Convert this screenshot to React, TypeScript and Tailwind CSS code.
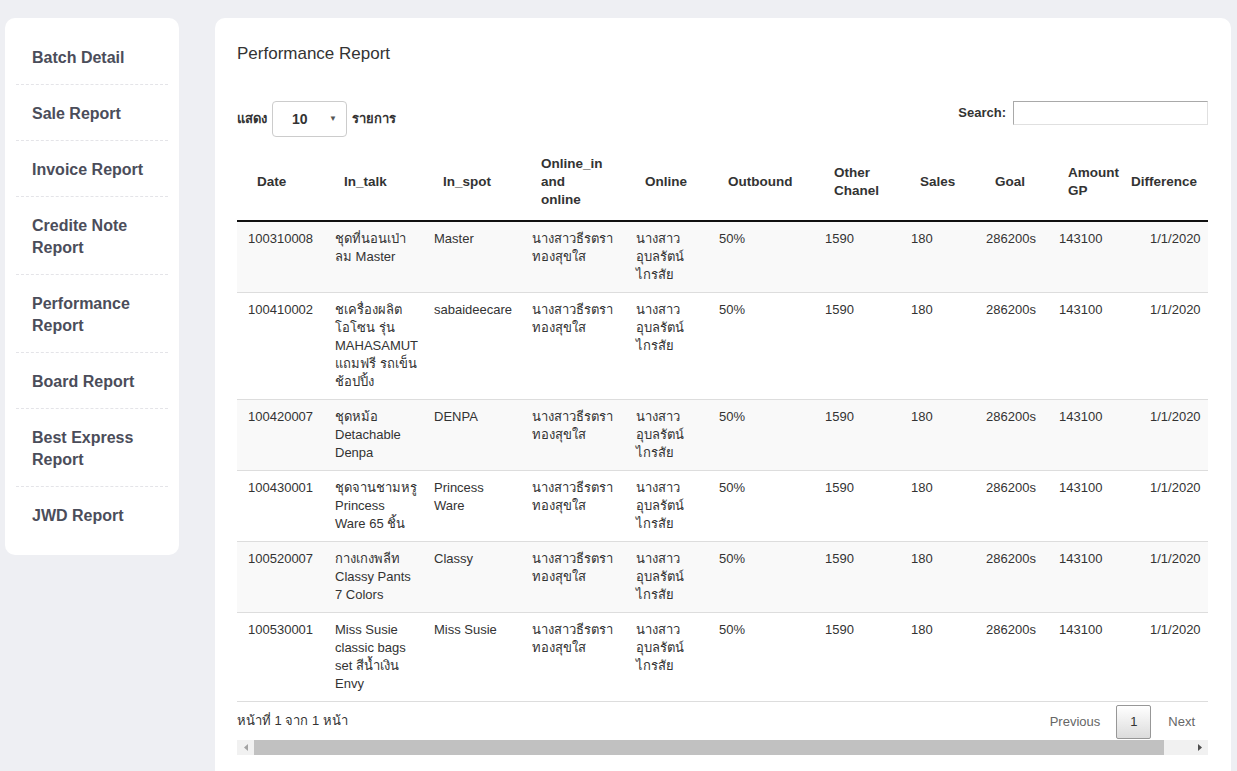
import React from 'react';

const menu = [
    ['Batch Detail'],
    ['Sale Report'],
    ['Invoice Report'],
    ['Credite Note', 'Report'],
    ['Performance', 'Report'],
    ['Board Report'],
    ['Best Express', 'Report'],
    ['JWD Report'],
];

const columns = [
    { title: ['Date'], width: 87 },
    { title: ['In_talk'], width: 99 },
    { title: ['In_spot'], width: 98 },
    { title: ['Online_in', 'and', 'online'], width: 104 },
    { title: ['Online'], width: 83 },
    { title: ['Outbound'], width: 106 },
    { title: ['Other', 'Chanel'], width: 86 },
    { title: ['Sales'], width: 75 },
    { title: ['Goal'], width: 73 },
    { title: ['Amount', 'GP'], width: 63 },
    { title: ['Difference'], width: 150 },
];

const rows = [
    { id: '100310008', talk: ['ชุดที่นอนเป่า', 'ลม Master'], spot: ['Master'] },
    { id: '100410002', talk: ['ชเครื่องผลิต', 'โอโซน รุ่น', 'MAHASAMUT', 'แถมฟรี รถเข็น', 'ช้อปปิ้ง'], spot: ['sabaideecare'] },
    { id: '100420007', talk: ['ชุดหม้อ', 'Detachable', 'Denpa'], spot: ['DENPA'] },
    { id: '100430001', talk: ['ชุดจานชามหรู', 'Princess', 'Ware 65 ชิ้น'], spot: ['Princess', 'Ware'] },
    { id: '100520007', talk: ['กางเกงพลีท', 'Classy Pants', '7 Colors'], spot: ['Classy'] },
    { id: '100530001', talk: ['Miss Susie', 'classic bags', 'set สีน้ำเงิน', 'Envy'], spot: ['Miss Susie'] },
];

function Lines({ lines }: { lines: string[] }) {
    return (
        <>
            {lines.map((l, i) => (
                <div key={i} className="whitespace-nowrap">{l}</div>
            ))}
        </>
    );
}

export default function App() {
    return (
        <div
            className="w-[1237px] h-[771px] overflow-hidden bg-[#eeeff3] flex items-start text-[#333]"
            style={{ fontFamily: "'Liberation Sans', Tahoma, 'DejaVu Sans', sans-serif" }}
        >
            {/* Sidebar */}
            <div className="ml-[5px] mt-[18px] w-[174px] shrink-0 bg-white rounded-[10px] px-[11px] pt-[11px] pb-[13px]">
                {menu.map((item, i) => (
                    <div
                        key={i}
                        className={`pl-[16px] pt-[18px] pb-[15px] text-[16px] leading-[22px] font-bold text-[#4b4d5a] ${i < menu.length - 1 ? 'border-b border-dashed border-[#e4e4e8]' : ''}`}
                    >
                        <Lines lines={item} />
                    </div>
                ))}
            </div>

            {/* Main */}
            <div className="ml-[36px] mt-[18px] w-[1016px] h-[800px] shrink-0 bg-white rounded-[10px] pl-[22px] pr-[23px] pt-[24px]">
                <h1 className="text-[17px] leading-[24px] text-[#333]">Performance Report</h1>

                <div className="mt-[35px] flex items-center justify-between">
                    <div className="flex items-center text-[13px] font-bold">
                        <span>แสดง</span>
                        <div className="ml-[5px] w-[75px] h-[36px] border border-[#ccc] rounded-[4px] flex items-center justify-between pl-[19px] pr-[9px]">
                            <span className="text-[14px]">10</span>
                            <span className="text-[8px] text-[#555]">▼</span>
                        </div>
                        <span className="ml-[5px]">รายการ</span>
                    </div>
                    <div className="flex items-center self-start text-[13px] font-bold">
                        <span>Search:</span>
                        <div className="ml-[7px] w-[195px] h-[24px] border border-[#a9a9a9] border-r-[#e0e0e0] border-b-[#e0e0e0]" />
                    </div>
                </div>

                {/* Table */}
                <div className="mt-[13px] w-[971px] overflow-hidden">
                    <table className="table-fixed border-collapse w-[1024px] text-[13px] leading-[18px]">
                        <colgroup>
                            {columns.map((c, i) => (
                                <col key={i} style={{ width: c.width }} />
                            ))}
                        </colgroup>
                        <thead>
                            <tr className="h-[70px] border-b-2 border-[#111]">
                                {columns.map((c, i) => (
                                    <th key={i} className="text-left align-middle font-bold text-[13.5px] pl-[20px] pt-[5px] pb-[11px]">
                                        <Lines lines={c.title} />
                                    </th>
                                ))}
                            </tr>
                        </thead>
                        <tbody>
                            {rows.map((r, i) => (
                                <tr key={r.id} className={`${i % 2 === 0 ? 'bg-[#f9f9f9]' : 'bg-white'} ${i > 0 ? 'border-t border-[#ddd]' : ''} ${i === rows.length - 1 ? 'border-b border-[#111]' : ''}`}>
                                    <td className="align-top pl-[11px] pt-[8px] pb-[8px]">{r.id}</td>
                                    <td className="align-top pl-[11px] pt-[8px] pb-[8px]"><Lines lines={r.talk} /></td>
                                    <td className="align-top pl-[11px] pt-[8px] pb-[8px]"><Lines lines={r.spot} /></td>
                                    <td className="align-top pl-[11px] pt-[8px] pb-[8px]"><Lines lines={['นางสาวธีรตรา', 'ทองสุขใส']} /></td>
                                    <td className="align-top pl-[11px] pt-[8px] pb-[8px]"><Lines lines={['นางสาว', 'อุบลรัตน์', 'ไกรสัย']} /></td>
                                    <td className="align-top pl-[11px] pt-[8px] pb-[8px]">50%</td>
                                    <td className="align-top pl-[11px] pt-[8px] pb-[8px]">1590</td>
                                    <td className="align-top pl-[11px] pt-[8px] pb-[8px]">180</td>
                                    <td className="align-top pl-[11px] pt-[8px] pb-[8px]">286200s</td>
                                    <td className="align-top pl-[11px] pt-[8px] pb-[8px]">143100</td>
                                    <td className="align-top pl-[39px] pt-[8px] pb-[8px]">1/1/2020</td>
                                </tr>
                            ))}
                        </tbody>
                    </table>

                    {/* Footer */}
                    <div className="h-[38px] flex items-start justify-between">
                        <div className="mt-[10px] text-[13px] leading-[18px]">หน้าที่ 1 จาก 1 หน้า</div>
                        <div className="mt-[3px] flex items-center text-[13px] text-[#666] mr-[13px]">
                            <span className="pr-[16px]">Previous</span>
                            <span className="w-[35px] h-[34px] flex items-center justify-center border border-[#979797] rounded-[2px] text-[#333] bg-gradient-to-b from-white to-[#dcdcdc]">1</span>
                            <span className="pl-[17px]">Next</span>
                        </div>
                    </div>

                    {/* Scrollbar */}
                    <div className="h-[15px] bg-[#f1f1f1] flex items-center">
                        <div className="w-[17px] flex justify-center">
                            <svg width="4" height="7" viewBox="0 0 4 7"><path d="M4 0 L0 3.5 L4 7 Z" fill="#a3a3a3" /></svg>
                        </div>
                        <div className="w-[910px] h-[15px] bg-[#c1c1c1]" />
                        <div className="flex-1 flex justify-end pr-[6px]">
                            <svg width="4" height="7" viewBox="0 0 4 7"><path d="M0 0 L4 3.5 L0 7 Z" fill="#505050" /></svg>
                        </div>
                    </div>
                </div>
            </div>
        </div>
    );
}
